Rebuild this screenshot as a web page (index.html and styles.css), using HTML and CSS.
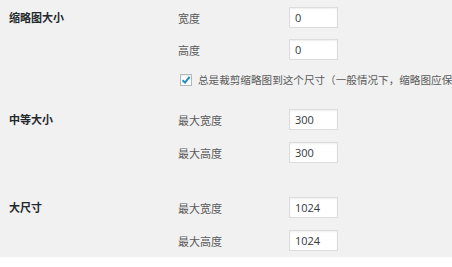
FILE: index.html
```html
<!DOCTYPE html>
<html lang="zh-CN">
<head>
    <meta charset="UTF-8">
    <meta name="viewport" content="width=device-width, initial-scale=1.0">
    <title>媒体设置</title>
    <link rel="stylesheet" href="styles.css">
</head>
<body>
    <div class="wrap">
        <div class="section first">
            <div class="section-title">缩略图大小</div>
            <div class="fields">
                <div class="field">
                    <label>宽度</label>
                    <input type="text" value="0">
                </div>
                <div class="field">
                    <label>高度</label>
                    <input type="text" value="0">
                </div>
                <div class="field check-row">
                    <span class="checkbox">
                        <svg width="10" height="10" viewBox="0 0 10 10">
                            <path d="M1.6 5.2 L4 7.6 L8.6 1.8" fill="none" stroke="#1e8cbe" stroke-width="2"/>
                        </svg>
                    </span>
                    <span class="check-text">总是裁剪缩略图到这个尺寸（一般情况下，缩略图应保</span>
                </div>
            </div>
        </div>

        <div class="section medium">
            <div class="section-title">中等大小</div>
            <div class="fields">
                <div class="field">
                    <label>最大宽度</label>
                    <input type="text" value="300">
                </div>
                <div class="field">
                    <label>最大高度</label>
                    <input type="text" value="300">
                </div>
            </div>
        </div>

        <div class="section large">
            <div class="section-title">大尺寸</div>
            <div class="fields">
                <div class="field">
                    <label>最大宽度</label>
                    <input type="text" value="1024">
                </div>
                <div class="field">
                    <label>最大高度</label>
                    <input type="text" value="1024">
                </div>
            </div>
        </div>
    </div>
</body>
</html>
```

FILE: styles.css
```css
body {
    margin: 0;
    padding: 0;
    background-color: #fff;
    font-family: "Noto Sans CJK SC", "Noto Sans", sans-serif;
    font-size: 11px;
    overflow: hidden;
}

.wrap {
    background-color: #f1f1f1;
    height: 257px;
    padding-top: 7px;
    box-sizing: border-box;
    white-space: nowrap;
    overflow: hidden;
}

.section {
    display: flex;
}

.section.medium {
    margin-top: 21px;
}

.section.large {
    margin-top: 34px;
}

.section-title {
    flex-shrink: 0;
    width: 169px;
    padding-left: 9px;
    line-height: 21px;
    font-weight: bold;
    color: #23282d;
}

.fields {
    display: flex;
    flex-direction: column;
    gap: 11px;
    min-width: 0;
}

.medium .fields,
.large .fields {
    gap: 12px;
}

.field {
    display: flex;
    align-items: center;
    height: 21px;
}

.field label {
    flex-shrink: 0;
    width: 111px;
    color: #5a5a5a;
}

.field input {
    flex-shrink: 0;
    width: 49px;
    height: 21px;
    box-sizing: border-box;
    margin: 0;
    padding: 0 5px;
    border: 1px solid #ddd;
    box-shadow: inset 0 1px 2px rgba(0, 0, 0, 0.07);
    background-color: #fff;
    font-family: "Open Sans", sans-serif;
    font-size: 11px;
    color: #32373c;
    outline: none;
}

.check-row {
    height: 17px;
    padding-left: 2px;
}

.checkbox {
    flex-shrink: 0;
    display: flex;
    align-items: center;
    justify-content: center;
    width: 12px;
    height: 12px;
    box-sizing: border-box;
    border: 1px solid #b4b9be;
    background-color: #fff;
    box-shadow: inset 0 1px 2px rgba(0, 0, 0, 0.1);
    margin-right: 6px;
}

.check-text {
    color: #5a5a5a;
    font-size: 10.6px;
}
```
